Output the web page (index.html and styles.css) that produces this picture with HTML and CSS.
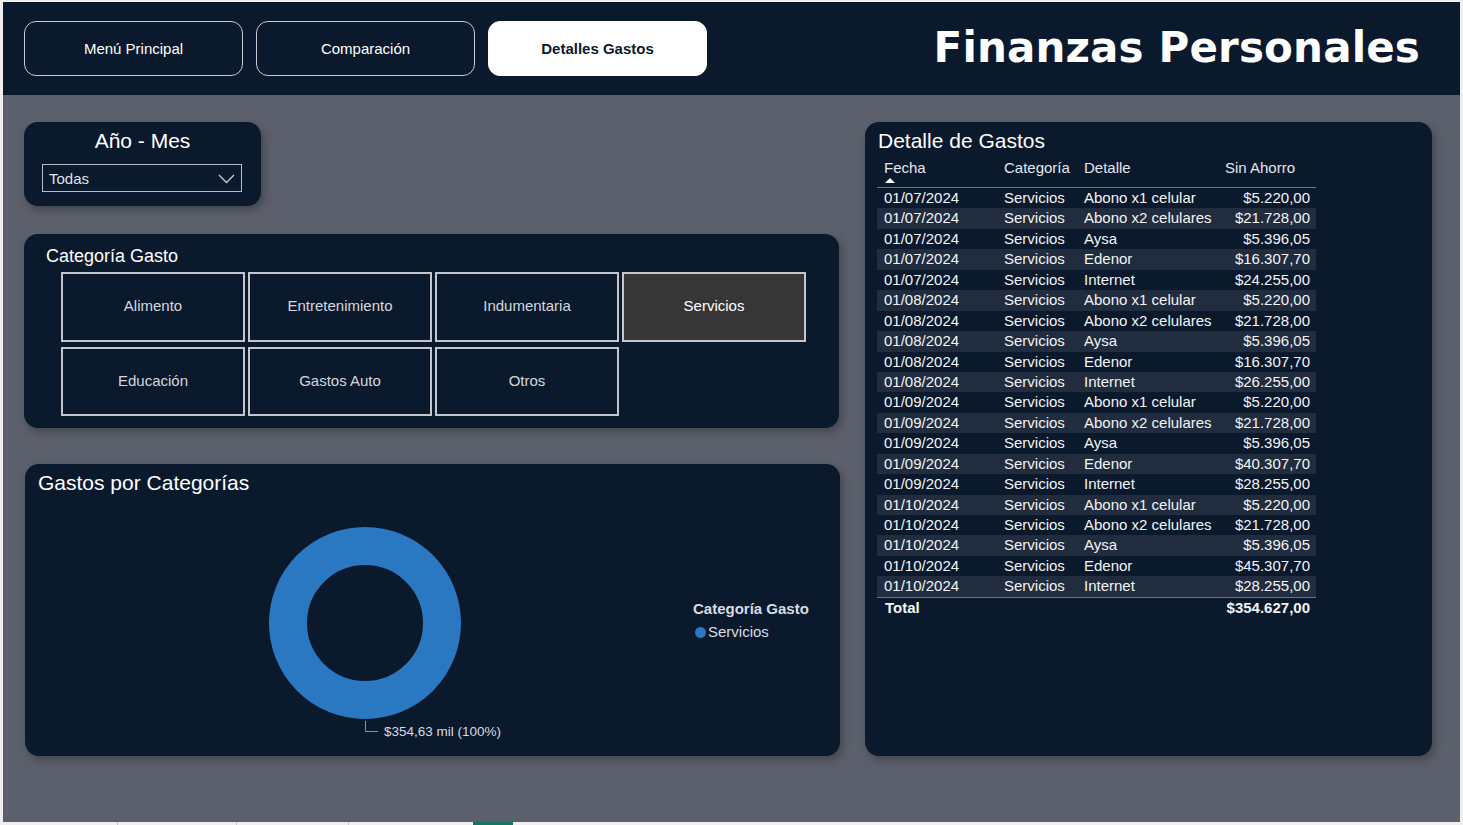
FILE: index.html
```html
<!DOCTYPE html>
<html lang="es">
<head>
<meta charset="utf-8">
<title>Finanzas Personales</title>
<link rel="stylesheet" href="styles.css">
</head>
<body>
<div class="canvas">
  <header class="header">
    <nav class="nav">
      <div class="navbtn">Menú Principal</div>
      <div class="navbtn">Comparación</div>
      <div class="navbtn navbtn-active">Detalles Gastos</div>
    </nav>
    <h1 class="title">Finanzas Personales</h1>
  </header>

  <main class="main">
    <div class="left">
      <section class="card card-year">
        <h2 class="year-title">Año - Mes</h2>
        <div class="dropdown">
          <span>Todas</span>
          <svg class="chev" width="17" height="10" viewBox="0 0 17 10"><polyline points="1,1 8.5,8.5 16,1" fill="none" stroke="#c9ced6" stroke-width="1.3"/></svg>
        </div>
      </section>

      <section class="card card-cat">
        <h2 class="cat-title">Categoría Gasto</h2>
        <div class="cat-grid">
          <div class="cat">Alimento</div>
          <div class="cat">Entretenimiento</div>
          <div class="cat">Indumentaria</div>
          <div class="cat cat-selected">Servicios</div>
          <div class="cat">Educación</div>
          <div class="cat">Gastos Auto</div>
          <div class="cat">Otros</div>
        </div>
      </section>

      <section class="card card-chart">
        <h2 class="chart-title">Gastos por Categorías</h2>
        <div class="chart-body">
          <svg class="donut" width="260" height="230" viewBox="0 0 260 230">
            <circle cx="100" cy="108" r="77" fill="none" stroke="#2a78c2" stroke-width="38"/>
            <polyline points="100.5,206 100.5,216.5 113,216.5" fill="none" stroke="#8b929c" stroke-width="1"/>
            <text x="119" y="221" class="donut-label">$354,63 mil (100%)</text>
          </svg>
          <div class="legend">
            <div class="legend-title">Categoría Gasto</div>
            <div class="legend-item"><span class="dot"></span>Servicios</div>
          </div>
        </div>
      </section>
    </div>

    <section class="card card-table">
      <h2 class="table-title">Detalle de Gastos</h2>
      <div class="table">
        <div class="row head">
          <div class="c">Fecha<span class="sort"></span></div>
          <div class="c">Categoría</div>
          <div class="c">Detalle</div>
          <div class="c">Sin Ahorro</div>
        </div>
        <div class="row"><div class="c">01/07/2024</div><div class="c">Servicios</div><div class="c">Abono x1 celular</div><div class="c num">$5.220,00</div></div>
        <div class="row alt"><div class="c">01/07/2024</div><div class="c">Servicios</div><div class="c">Abono x2 celulares</div><div class="c num">$21.728,00</div></div>
        <div class="row"><div class="c">01/07/2024</div><div class="c">Servicios</div><div class="c">Aysa</div><div class="c num">$5.396,05</div></div>
        <div class="row alt"><div class="c">01/07/2024</div><div class="c">Servicios</div><div class="c">Edenor</div><div class="c num">$16.307,70</div></div>
        <div class="row"><div class="c">01/07/2024</div><div class="c">Servicios</div><div class="c">Internet</div><div class="c num">$24.255,00</div></div>
        <div class="row alt"><div class="c">01/08/2024</div><div class="c">Servicios</div><div class="c">Abono x1 celular</div><div class="c num">$5.220,00</div></div>
        <div class="row"><div class="c">01/08/2024</div><div class="c">Servicios</div><div class="c">Abono x2 celulares</div><div class="c num">$21.728,00</div></div>
        <div class="row alt"><div class="c">01/08/2024</div><div class="c">Servicios</div><div class="c">Aysa</div><div class="c num">$5.396,05</div></div>
        <div class="row"><div class="c">01/08/2024</div><div class="c">Servicios</div><div class="c">Edenor</div><div class="c num">$16.307,70</div></div>
        <div class="row alt"><div class="c">01/08/2024</div><div class="c">Servicios</div><div class="c">Internet</div><div class="c num">$26.255,00</div></div>
        <div class="row"><div class="c">01/09/2024</div><div class="c">Servicios</div><div class="c">Abono x1 celular</div><div class="c num">$5.220,00</div></div>
        <div class="row alt"><div class="c">01/09/2024</div><div class="c">Servicios</div><div class="c">Abono x2 celulares</div><div class="c num">$21.728,00</div></div>
        <div class="row"><div class="c">01/09/2024</div><div class="c">Servicios</div><div class="c">Aysa</div><div class="c num">$5.396,05</div></div>
        <div class="row alt"><div class="c">01/09/2024</div><div class="c">Servicios</div><div class="c">Edenor</div><div class="c num">$40.307,70</div></div>
        <div class="row"><div class="c">01/09/2024</div><div class="c">Servicios</div><div class="c">Internet</div><div class="c num">$28.255,00</div></div>
        <div class="row alt"><div class="c">01/10/2024</div><div class="c">Servicios</div><div class="c">Abono x1 celular</div><div class="c num">$5.220,00</div></div>
        <div class="row"><div class="c">01/10/2024</div><div class="c">Servicios</div><div class="c">Abono x2 celulares</div><div class="c num">$21.728,00</div></div>
        <div class="row alt"><div class="c">01/10/2024</div><div class="c">Servicios</div><div class="c">Aysa</div><div class="c num">$5.396,05</div></div>
        <div class="row"><div class="c">01/10/2024</div><div class="c">Servicios</div><div class="c">Edenor</div><div class="c num">$45.307,70</div></div>
        <div class="row alt"><div class="c">01/10/2024</div><div class="c">Servicios</div><div class="c">Internet</div><div class="c num">$28.255,00</div></div>
        <div class="row total"><div class="c">Total</div><div class="c"></div><div class="c"></div><div class="c num">$354.627,00</div></div>
      </div>
    </section>
  </main>
</div>
<div class="tabs">
  <div class="tab t1"></div>
  <div class="tab t2"></div>
  <div class="tab t3"></div>
  <div class="tab t4"></div>
  <div class="tab tab-active"></div>
</div>
</body>
</html>
```

FILE: styles.css
```css
* { box-sizing: border-box; }
html, body { margin: 0; padding: 0; }
body {
  background: #f0efee;
  font-family: "Liberation Sans", Arial, sans-serif;
  width: 1463px;
  height: 825px;
  overflow: hidden;
}
h1, h2 { margin: 0; font-weight: normal; }

.canvas {
  margin: 2px 3px 0 3px;
  width: 1457px;
  height: 820px;
  background: #5c606c;
}

.header {
  height: 93px;
  background: #0b192d;
  display: flex;
  justify-content: space-between;
  align-items: flex-start;
  padding: 19px 40px 0 21px;
}
.nav { display: flex; gap: 13px; }
.navbtn {
  width: 219px;
  height: 55px;
  border: 1px solid #c7cbd1;
  border-radius: 12px;
  color: #ffffff;
  font-size: 15px;
  display: flex;
  align-items: center;
  justify-content: center;
}
.navbtn-active {
  background: #ffffff;
  color: #0b192d;
  font-weight: 700;
  border-color: #ffffff;
}
.title {
  font-family: "DejaVu Sans", Verdana, sans-serif;
  font-weight: 700;
  font-size: 42px;
  line-height: 50px;
  color: #ffffff;
  margin-top: 2px;
  letter-spacing: 0.15px;
}

.main {
  display: flex;
  gap: 25px;
  padding: 27px 0 0 21px;
}
.left { display: flex; flex-direction: column; width: 816px; }

.card {
  background: #0b192d;
  border-radius: 14px;
  box-shadow: 3px 4px 8px rgba(0, 0, 0, 0.28);
  color: #ffffff;
}

.card-year {
  width: 237px;
  height: 84px;
  padding: 8px 0 0 18px;
}
.year-title {
  font-size: 21px;
  line-height: 22px;
  text-align: center;
  padding-right: 18px;
}
.dropdown {
  margin-top: 12px;
  width: 200px;
  height: 28px;
  border: 1px solid #b5bcc6;
  display: flex;
  align-items: center;
  justify-content: space-between;
  padding: 1px 6px 0 6px;
  font-size: 15px;
  color: #dfe3e8;
}
.chev { margin-top: 1px; }

.card-cat {
  margin-top: 28px;
  width: 815px;
  height: 194px;
  padding: 11px 0 0 22px;
}
.cat-title { font-size: 18px; line-height: 22px; }
.cat-grid {
  margin: 5px 0 0 15px;
  display: grid;
  grid-template-columns: repeat(4, 184px);
  grid-template-rows: 70px 69px;
  column-gap: 3px;
  row-gap: 5px;
}
.cat {
  border: 2px solid #c3c7cd;
  display: flex;
  align-items: center;
  justify-content: center;
  padding-bottom: 3px;
  font-size: 15px;
  color: #d4d8de;
}
.cat-selected { background: #363636; color: #ffffff; }

.card-chart {
  margin-top: 36px;
  margin-left: 1px;
  width: 815px;
  height: 292px;
  padding: 8px 0 0 13px;
}
.chart-title { font-size: 21px; line-height: 22px; }
.chart-body { display: flex; align-items: flex-start; }
.donut { margin: 21px 0 0 227px; display: block; }
.donut-label { font-family: "Liberation Sans", Arial, sans-serif; font-size: 13.5px; fill: #d6dae0; }
.legend { margin: 106px 0 0 168px; }
.legend-title { font-size: 15px; font-weight: 700; color: #d8dce2; line-height: 18px; }
.legend-item {
  display: flex;
  align-items: center;
  font-size: 15px;
  color: #d8dce2;
  line-height: 18px;
  margin-top: 5px;
  margin-left: 2px;
}
.dot {
  width: 11px;
  height: 11px;
  border-radius: 50%;
  background: #2a78c2;
  margin-right: 2px;
}

.card-table {
  width: 567px;
  height: 634px;
  padding: 8px 0 0 12px;
}
.table-title { font-size: 21px; line-height: 22px; padding-left: 1px; }
.table { width: 439px; margin-top: 6px; }
.row {
  display: grid;
  grid-template-columns: 120px 80px 141px 98px;
  height: 20.45px;
  font-size: 15px;
  line-height: 20px;
  color: #f2f4f6;
}
.row .c { padding-left: 7px; white-space: nowrap; }
.row .num { text-align: right; padding-left: 0; padding-right: 6px; }
.row.alt { background: #212c3e; }
.row.head {
  height: 30px;
  border-bottom: 1px solid #4a7cb4;
  color: #e4e7eb;
  line-height: 20px;
}
.row.head .c:last-child { padding-left: 7px; }
.sort {
  display: block;
  width: 0;
  height: 0;
  margin: 0 0 0 1px;
  border-left: 5px solid transparent;
  border-right: 5px solid transparent;
  border-bottom: 5px solid #ffffff;
}
.row.total {
  border-top: 1px solid #4a7cb4;
  font-weight: 700;
  height: 21px;
}
.row.total .c:first-child { padding-left: 8px; }

.tabs {
  display: flex;
  height: 3px;
}
.tab { height: 3px; border-right: 1px solid #c8c8c8; }
.t1 { width: 118px; }
.t2 { width: 119px; }
.t3 { width: 112px; }
.t4 { width: 124px; border-right: none; }
.tab-active { width: 40px; background: #117865; border-right: none; }
```
